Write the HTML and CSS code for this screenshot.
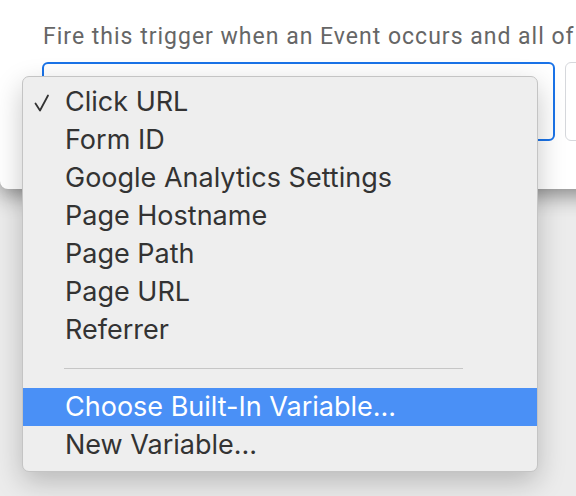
FILE: index.html
```html
<!DOCTYPE html>
<html lang="en">
<head>
    <meta charset="UTF-8" />
    <title>Trigger Configuration</title>
    <link rel="stylesheet" href="styles.css">
</head>
<body>
    <div class="dialog">
        <p class="hint">Fire this trigger when an Event occurs and all of</p>

        <div class="condition-row">
            <div class="select active"></div>
            <div class="select"></div>
        </div>
    </div>

    <!-- native select popup -->
    <ul class="menu">
        <li class="item checked">
            <svg class="check" width="16" height="22" viewBox="0 0 16 22">
                <path d="M1.5 11.5 L6 18.5 L14 3.5" fill="none" stroke="#333" stroke-width="1.8" stroke-linecap="round" stroke-linejoin="round"/>
            </svg>
            Click URL
        </li>
        <li class="item">Form ID</li>
        <li class="item">Google Analytics Settings</li>
        <li class="item">Page Hostname</li>
        <li class="item">Page Path</li>
        <li class="item">Page URL</li>
        <li class="item">Referrer</li>
        <li class="separator"></li>
        <li class="item selected">Choose Built-In Variable...</li>
        <li class="item">New Variable...</li>
    </ul>
</body>
</html>
```

FILE: styles.css
```css
body {
    margin: 0;
    height: 496px;
    overflow: hidden;
    background-color: #ececec;
    font-family: Roboto, Arial, sans-serif;
}

.dialog {
    width: 640px;
    height: 189px;
    box-sizing: border-box;
    padding: 23px 0 0 43px;
    background: #ffffff;
    border-radius: 0 0 8px 8px;
    box-shadow: 0 6px 22px rgba(0, 0, 0, 0.45);
}

.hint {
    margin: 0;
    font-size: 23px;
    line-height: 28px;
    letter-spacing: 1px;
    color: #666666;
    white-space: nowrap;
}

.condition-row {
    display: flex;
    gap: 10px;
    margin: 11px 0 0 -1px;
}

.select {
    flex: none;
    width: 513px;
    height: 79px;
    box-sizing: border-box;
    border: 1px solid #d6d8dc;
    border-radius: 6px;
}

.select.active {
    border: 2px solid #1a73e8;
}

/* the popup list */
.menu {
    position: absolute;
    left: 22px;
    top: 76px;
    width: 516px;
    margin: 0;
    padding: 6px 0 7px;
    box-sizing: border-box;
    list-style: none;
    background: #eeeeee;
    border: 1px solid #c4c4c4;
    border-radius: 7px;
    box-shadow: 0 10px 28px rgba(0, 0, 0, 0.22);
    font-family: Inter, "Noto Sans", sans-serif;
    font-size: 27px;
    color: #333333;
}

.item {
    position: relative;
    height: 38px;
    line-height: 38px;
    padding-left: 42px;
    white-space: nowrap;
}

.check {
    position: absolute;
    left: 11px;
    top: 9px;
}

.separator {
    height: 39px;
    display: flex;
    align-items: center;
    padding-left: 41px;
}

.separator::before {
    content: "";
    width: 399px;
    height: 1px;
    background: #c6c6c6;
}

.selected {
    background: #4a90f6;
    color: #ffffff;
}
```
